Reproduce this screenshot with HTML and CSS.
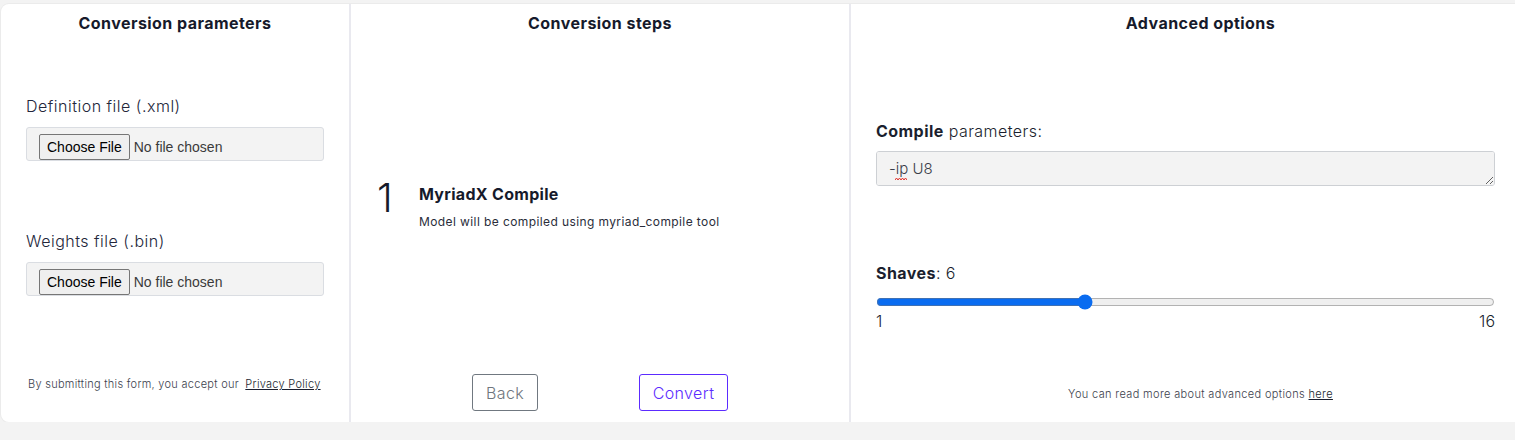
FILE: index.html
```html
<!DOCTYPE html>
<html lang="en">
<head>
<meta charset="utf-8">
<title>Model conversion</title>
<link rel="stylesheet" href="styles.css">
</head>
<body>
<main class="card">
  <section class="col col-params">
    <h2 class="col-title">Conversion parameters</h2>
    <label class="field-label first">Definition file (.xml)</label>
    <div class="file-box"><input class="file-input" type="file"></div>
    <label class="field-label second">Weights file (.bin)</label>
    <div class="file-box"><input class="file-input" type="file"></div>
    <p class="note note-left">By submitting this form, you accept our <a href="#">Privacy Policy</a></p>
  </section>
  <section class="col col-steps">
    <h2 class="col-title">Conversion steps</h2>
    <div class="steps">
      <div class="step">
        <span class="step-num">1</span>
        <div class="step-body">
          <div class="step-name">MyriadX Compile</div>
          <div class="step-desc">Model will be compiled using myriad_compile tool</div>
        </div>
      </div>
    </div>
    <div class="actions">
      <button class="btn btn-back" type="button">Back</button>
      <button class="btn btn-convert" type="button">Convert</button>
    </div>
  </section>
  <section class="col col-adv">
    <h2 class="col-title wide">Advanced options</h2>
    <div class="opt-label compile-label"><b>Compile</b> parameters:</div>
    <div class="textarea-wrap">
      <textarea class="params" spellcheck="false">-ip U8</textarea>
      <svg class="squiggle" width="12" height="4" viewBox="0 0 12 4" aria-hidden="true"><path d="M0 3 L1.5 1 L3 3 L4.5 1 L6 3 L7.5 1 L9 3 L10.5 1 L12 3" fill="none" stroke="#e0302a" stroke-width="1"/></svg>
    </div>
    <div class="opt-label shaves-label"><b>Shaves</b>: 6</div>
    <input class="range" type="range" min="1" max="16" value="6">
    <div class="range-scale"><span>1</span><span>16</span></div>
    <p class="note note-right">You can read more about advanced options <a href="#">here</a></p>
  </section>
</main>
</body>
</html>
```

FILE: styles.css
```css
html, body {
  margin: 0;
  padding: 0;
}
body {
  background: #f3f3f3;
  overflow: hidden;
  font-family: "Inter", "Noto Sans", sans-serif;
  color: #1b1f2e;
}
.card {
  margin: 4px 0 0 1px;
  width: calc(100% + 34px);
  height: 418px;
  background: #fff;
  border-radius: 8px;
  box-shadow: 0 0 0 1px #ebebeb;
  display: flex;
}
.col {
  display: flex;
  flex-direction: column;
  box-sizing: border-box;
}
.col-params {
  width: 350px;
  padding: 0 25px;
  border-right: 2px solid #e9e9ef;
}
.col-steps {
  width: 500px;
  border-right: 2px solid #e9e9ef;
}
.col-adv {
  flex: 1;
  padding: 0 55px 0 25px;
}
.col-title {
  margin: 0;
  padding-top: 8px;
  font-size: 16px;
  line-height: 22px;
  font-weight: 700;
  letter-spacing: 0.45px;
  text-align: center;
  color: #161a2b;
}
.col-title.wide {
  margin-right: -30px;
}
.field-label {
  display: block;
  font-size: 16px;
  line-height: 20px;
  font-weight: 300;
  color: #23263a;
  letter-spacing: 0.5px;
}
.field-label.first { margin-top: 62px; }
.field-label.second { margin-top: 70px; }
.file-box {
  margin-top: 11px;
  height: 34px;
  box-sizing: border-box;
  background: #f3f3f3;
  border: 1px solid #dadde2;
  border-radius: 3px;
  padding: 6px 12px 0;
}
.file-input {
  font-family: "Liberation Sans", Arial, sans-serif;
  font-size: 14px;
  color: #3a3a3a;
}
.file-input::file-selector-button {
  font-family: "Liberation Sans", Arial, sans-serif;
  font-size: 14px;
  height: 26px;
  padding: 0 7px;
  margin-right: 4px;
  background: #efefef;
  border: 1px solid #767676;
  border-radius: 2px;
  color: #000;
}
.note {
  margin: 0;
  font-size: 11px;
  line-height: 16px;
  font-weight: 300;
  color: #3b3e4c;
}
.note a {
  color: #1b1f2e;
  text-decoration: underline;
}
.note-left {
  margin-top: 80px;
  padding-left: 2px;
  white-space: nowrap;
  letter-spacing: 0.28px;
}
.note-left a { margin-left: 3px; }
.steps {
  flex: 1;
  display: flex;
  align-items: center;
  padding: 4px 26px 0;
}
.step {
  display: flex;
  align-items: flex-start;
}
.step-num {
  font-size: 40px;
  line-height: 40px;
  font-weight: 300;
  width: 42px;
  color: #161a2b;
  margin-top: -6px;
}
.step-name {
  font-size: 16px;
  line-height: 20px;
  font-weight: 700;
  letter-spacing: 0.3px;
  color: #161a2b;
}
.step-desc {
  margin-top: 11px;
  font-size: 12px;
  line-height: 14px;
  font-weight: 400;
  letter-spacing: 0.4px;
  color: #2a2d3a;
}
.actions {
  display: flex;
  justify-content: center;
  gap: 101px;
  padding-bottom: 11px;
}
.btn {
  height: 37px;
  box-sizing: border-box;
  background: #fff;
  border-radius: 3px;
  font-family: "Inter", "Noto Sans", sans-serif;
  font-size: 16px;
  font-weight: 300;
  letter-spacing: 0.4px;
  padding: 0;
}
.btn-back {
  width: 66px;
  border: 1px solid #707880;
  color: #6f767d;
}
.btn-convert {
  width: 89px;
  border: 1px solid #5c2bff;
  color: #5c2bff;
}
.opt-label {
  font-size: 16px;
  line-height: 20px;
  font-weight: 300;
  letter-spacing: 0.45px;
  color: #1b1f2e;
}
.opt-label b { font-weight: 700; }
.compile-label { margin-top: 87px; }
.textarea-wrap {
  position: relative;
  margin-top: 10px;
}
.params {
  display: block;
  width: 100%;
  height: 35px;
  box-sizing: border-box;
  resize: vertical;
  background: #f3f3f3;
  border: 1px solid #cdd0d4;
  border-radius: 3px;
  padding: 8px 12px;
  font-family: "Inter", "Noto Sans", sans-serif;
  font-size: 15px;
  line-height: 18px;
  font-weight: 300;
  color: #3a3d48;
}
.squiggle {
  position: absolute;
  left: 19px;
  top: 26px;
}
.shaves-label { margin-top: 77px; }
.range {
  margin: 11px 0 0;
  width: 100%;
  accent-color: #0a6cf0;
}
.range-scale {
  display: flex;
  justify-content: space-between;
  font-size: 16px;
  line-height: 18px;
  font-weight: 300;
  color: #1b1f2e;
  margin-top: 2px;
}
.note-right {
  margin-top: auto;
  margin-right: -30px;
  padding-bottom: 20px;
  text-align: center;
  letter-spacing: 0.35px;
}
```
